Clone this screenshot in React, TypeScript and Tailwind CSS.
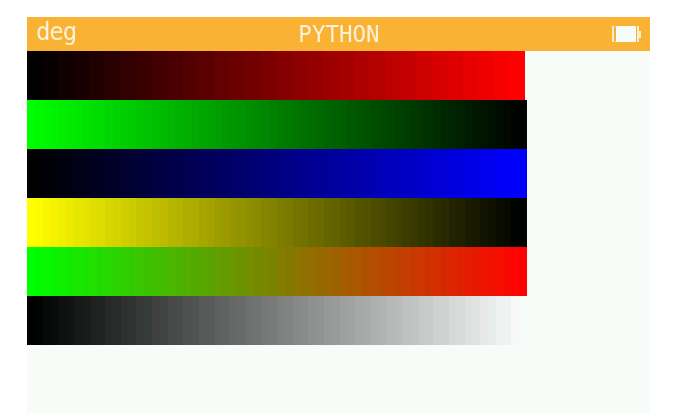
type Channel = (v: number) => number;

const CELLS = 64;

// The screen is a 16-bit panel: red and blue keep 5 bits, green keeps 6.
const five = (v: number) => Math.round((Math.floor(v / 8) * 255) / 31);
const six = (v: number) => Math.round((Math.floor(v / 4) * 255) / 63);
const rawFive = (v: number) => Math.floor(v / 8) * 8;
const rawSix = (v: number) => Math.floor(v / 4) * 4;

const up: Channel = (v) => v;
const down: Channel = (v) => 255 - v;
const off: Channel = () => 0;

const rows: { r: Channel; g: Channel; b: Channel; width: string; raw?: boolean }[] = [
  { r: up, g: off, b: off, width: "w-[498px]" },
  { r: off, g: down, b: off, width: "w-[500px]" },
  { r: off, g: off, b: up, width: "w-[500px]" },
  { r: down, g: down, b: off, width: "w-[500px]" },
  { r: up, g: down, b: off, width: "w-[500px]" },
  { r: up, g: up, b: up, width: "w-[500px]", raw: true },
];

function Band({ r, g, b, width, raw }: { r: Channel; g: Channel; b: Channel; width: string; raw?: boolean }) {
  const q5 = raw ? rawFive : five;
  const q6 = raw ? rawSix : six;
  return (
    <div className={`flex h-[49px] ${width}`}>
      {Array.from({ length: CELLS }, (_, i) => {
        const v = i * 4 + 2;
        return (
          <div
            key={i}
            className="h-full flex-1"
            style={{ backgroundColor: `rgb(${q5(r(v))},${q6(g(v))},${q5(b(v))})` }}
          />
        );
      })}
    </div>
  );
}

function Battery() {
  return (
    <svg width="30" height="16" viewBox="0 0 30 16" className="block">
      <rect x="0" y="0" width="2" height="16" fill="#fdeecb" />
      <rect x="2" y="0" width="2" height="1" fill="#fff" opacity="0.3" />
      <rect x="2" y="15" width="2" height="1" fill="#fff" opacity="0.3" />
      <rect x="4" y="0" width="20" height="16" fill="#f8fcf8" />
      <rect x="25" y="0" width="2" height="16" fill="#fdeecb" />
      <rect x="27" y="5" width="2" height="7" fill="#fdeecb" />
    </svg>
  );
}

export default function App() {
  return (
    <div className="h-[413px] w-[677px] overflow-hidden bg-white pl-[27px] pt-[17px]">
      <div className="flex h-[396px] w-[623px] flex-col bg-[#f8fcf8]">
        <header
          className="flex h-[34px] items-center justify-between bg-[#f9b233] pl-[9px] pr-[8px] leading-none text-[#fdf1d8]"
          style={{ fontFamily: '"DejaVu Sans Mono", monospace' }}
        >
          <span className="mb-[4px] w-[60px] text-[24px] tracking-[-1.1px] blur-[0.3px]">deg</span>
          <span className="text-[22.5px] blur-[0.3px]">PYTHON</span>
          <span className="flex w-[60px] justify-end">
            <Battery />
          </span>
        </header>
        {rows.map((row, i) => (
          <Band key={i} {...row} />
        ))}
      </div>
    </div>
  );
}
